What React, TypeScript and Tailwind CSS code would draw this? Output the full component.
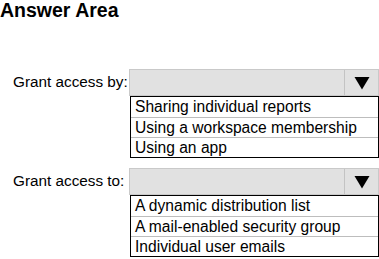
import React from 'react';

interface DropdownProps {
    label: string;
    options: string[];
}

const Dropdown: React.FC<DropdownProps> = ({ label, options }) => {
    return (
        <div className="flex items-start">
            <div className="w-[129px] h-[26px] flex items-center pl-[13px] text-[15.3px] text-black whitespace-nowrap">
                {label}
            </div>
            <div className="flex flex-col">
                <div className="w-[250px] h-[27px] flex bg-[#e1e1e1] border border-[#c9c9c9]">
                    <div className="flex-grow" />
                    <div className="w-[34px] h-full border-l border-[#c3c3c3] flex items-center justify-center">
                        <svg width="16" height="14" viewBox="0 0 16 14">
                            <polygon points="0.5,1 15.5,1 8,13.5" fill="#000" />
                        </svg>
                    </div>
                </div>
                <div className="ml-[1px] w-[249px] border border-black bg-white">
                    {options.map((opt, i) => (
                        <div
                            key={opt}
                            className={`h-[20px] flex items-center pl-[4px] text-[15.6px] leading-none text-black ${i > 0 ? 'border-t border-[#bdbdbd]' : ''}`}
                        >
                            {opt}
                        </div>
                    ))}
                </div>
            </div>
        </div>
    );
};

export default function App() {
    return (
        <div className="w-[379px] h-[259px] bg-white overflow-hidden" style={{ fontFamily: '"Liberation Sans", Arial, sans-serif' }}>
            <div className="h-[22px] text-[19.5px] font-bold leading-[20px] text-black">Answer Area</div>
            <div className="mt-[47px]">
                <Dropdown
                    label="Grant access by:"
                    options={['Sharing individual reports', 'Using a workspace membership', 'Using an app']}
                />
            </div>
            <div className="mt-[10px]">
                <Dropdown
                    label="Grant access to:"
                    options={['A dynamic distribution list', 'A mail-enabled security group', 'Individual user emails']}
                />
            </div>
        </div>
    );
}
